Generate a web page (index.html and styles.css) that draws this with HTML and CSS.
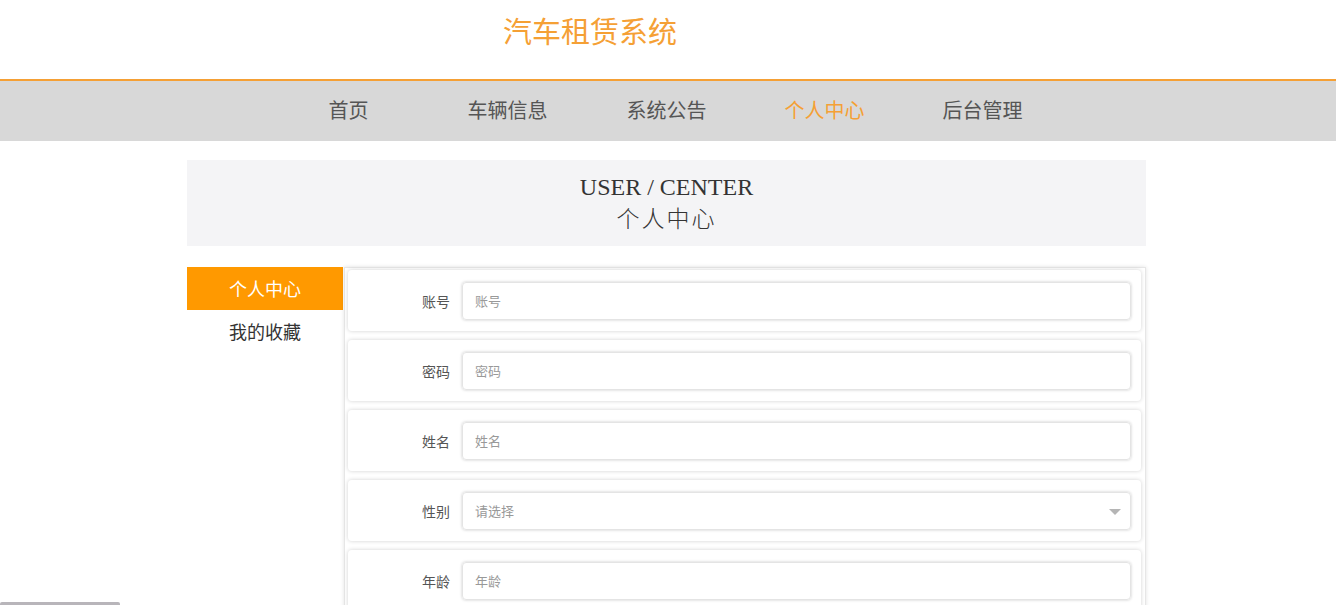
FILE: index.html
```html
<!DOCTYPE html>
<html>
<head>
	<meta charset="utf-8">
	<meta name="viewport" content="width=device-width">
	<title>个人中心</title>
	<link rel="stylesheet" href="styles.css">
</head>
<body>
	<div class="header">
		<div class="title">汽车租赁系统</div>
	</div>
	<div class="nav">
		<a class="nav-item">首页</a>
		<a class="nav-item">车辆信息</a>
		<a class="nav-item">系统公告</a>
		<a class="nav-item active">个人中心</a>
		<a class="nav-item">后台管理</a>
	</div>

	<div class="banner">
		<div class="banner-en">USER / CENTER</div>
		<div class="banner-cn">个人中心</div>
	</div>

	<div class="main">
		<div class="side">
			<div class="side-item active">个人中心</div>
			<div class="side-item">我的收藏</div>
		</div>
		<div class="form">
			<div class="row">
				<label class="label">账号</label>
				<div class="input"><span class="ph">账号</span></div>
			</div>
			<div class="row">
				<label class="label">密码</label>
				<div class="input"><span class="ph">密码</span></div>
			</div>
			<div class="row">
				<label class="label">姓名</label>
				<div class="input"><span class="ph">姓名</span></div>
			</div>
			<div class="row">
				<label class="label">性别</label>
				<div class="input select"><span class="ph">请选择</span><span class="arrow"></span></div>
			</div>
			<div class="row">
				<label class="label">年龄</label>
				<div class="input"><span class="ph">年龄</span></div>
			</div>
		</div>
	</div>
	<div class="scroll-thumb"></div>
</body>
</html>
```
FILE: styles.css
```css
* {
	box-sizing: border-box;
}

body {
	margin: 0;
	font-family: "Noto Sans CJK SC", "Noto Sans", sans-serif;
	color: #333;
	background: #fff;
	overflow: hidden;
	height: 605px;
}

.header {
	height: 81px;
	border-bottom: 2px solid #f5a035;
	padding-left: 503px;
	padding-top: 10px;
}
.title {
	color: #f5a035;
	font-size: 29px;
	line-height: 40px;
}

.nav {
	background: #d8d8d8;
	height: 60px;
	display: flex;
	justify-content: center;
	padding-right: 5px;
}
.nav-item {
	width: 158px;
	text-align: center;
	line-height: 58px;
	font-size: 20px;
	color: #555;
}
.nav-item:nth-child(2) { width: 160px; }
.nav-item:nth-child(3) { width: 158px; }
.nav-item.active {
	color: #f5a035;
}

.banner {
	width: 959px;
	margin: 19px 0 0 calc(50% - 481px);
	background: #f4f4f6;
	height: 86px;
	text-align: center;
	padding-top: 12px;
	color: #333;
}
.banner-en {
	font-family: "Liberation Serif", serif;
	font-size: 24px;
	line-height: 30px;
}
.banner-cn {
	font-family: "Liberation Serif", "Noto Sans CJK SC", serif;
	font-size: 23px;
	line-height: 36px;
	font-weight: 300;
	letter-spacing: 2px;
}

.main {
	width: 959px;
	margin: 21px 0 0 calc(50% - 481px);
	display: flex;
	align-items: flex-start;
}

.side {
	width: 156px;
	flex: none;
}
.side-item {
	height: 43px;
	line-height: 42px;
	text-align: center;
	font-size: 18px;
	color: #333;
}
.side-item.active {
	background: #ff9900;
	color: #fff;
}

.form {
	flex: 1;
	margin-left: 1px;
	border: 1px solid #e6e6e6;
	box-shadow: 0 0 4px rgba(0, 0, 0, 0.12);
	padding: 2px 4px 4px 3px;
	display: flex;
	flex-direction: column;
	gap: 9px;
	height: 360px;
}

.row {
	display: flex;
	align-items: center;
	height: 61px;
	flex: none;
	border-radius: 4px;
	box-shadow: 0 0 4px rgba(0, 0, 0, 0.18);
	background: #fff;
	padding: 0 10px 0 0;
}
.label {
	width: 102px;
	text-align: right;
	font-size: 14px;
	color: #555;
	flex: none;
}
.input {
	flex: 1;
	margin-left: 12px;
	height: 38px;
	border-radius: 4px;
	box-shadow: 0 0 3px rgba(0, 0, 0, 0.22);
	border: 1px solid #e4e4e4;
	display: flex;
	align-items: center;
	padding-left: 12px;
	position: relative;
}
.ph {
	font-size: 13px;
	color: #999;
}
.arrow {
	position: absolute;
	right: 9px;
	top: 16px;
	width: 0;
	height: 0;
	border-left: 6px solid transparent;
	border-right: 6px solid transparent;
	border-top: 6px solid #b5b5b5;
}

.scroll-thumb {
	position: fixed;
	left: 0;
	bottom: 0;
	width: 120px;
	height: 3px;
	background: #b8b5ba;
	border-radius: 2px 2px 0 0;
}
```
